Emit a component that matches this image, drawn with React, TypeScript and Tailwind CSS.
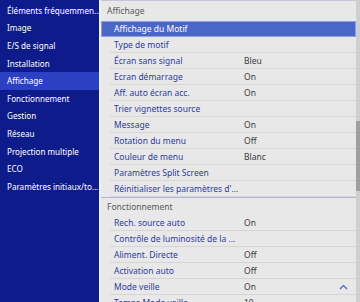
import React from 'react';

type Row = { label: string; value?: string };

const leftItems = [
  'Éléments fréquemmen...',
  'Image',
  'E/S de signal',
  'Installation',
  'Affichage',
  'Fonctionnement',
  'Gestion',
  'Réseau',
  'Projection multiple',
  'ECO',
  'Paramètres initiaux/to...',
];

const affichage: Row[] = [
  { label: 'Affichage du Motif' },
  { label: 'Type de motif' },
  { label: 'Écran sans signal', value: 'Bleu' },
  { label: 'Ecran démarrage', value: 'On' },
  { label: 'Aff. auto écran acc.', value: 'On' },
  { label: 'Trier vignettes source' },
  { label: 'Message', value: 'On' },
  { label: 'Rotation du menu', value: 'Off' },
  { label: 'Couleur de menu', value: 'Blanc' },
  { label: 'Paramètres Split Screen' },
  { label: "Réinitialiser les paramètres d'..." },
];

const fonctionnement: Row[] = [
  { label: 'Rech. source auto', value: 'On' },
  { label: 'Contrôle de luminosité de la ...' },
  { label: 'Aliment. Directe', value: 'Off' },
  { label: 'Activation auto', value: 'Off' },
  { label: 'Mode veille', value: 'On' },
  { label: 'Temps Mode veille', value: '10' },
];

const MenuRow = ({ row, active, chevron }: { row: Row; active?: boolean; chevron?: boolean }) => (
  <div
    className={
      active
        ? 'h-[16px] shrink-0 flex items-center bg-[#4a66c9] border border-[#8da0e0] text-white'
        : 'h-[16px] shrink-0 ml-[9px] flex items-center border-b border-[#d6d6d6] text-[#2e3b9c]'
    }
  >
    <span className={active ? 'pl-[12px] w-[143px] whitespace-nowrap' : 'pl-[4px] w-[134px] whitespace-nowrap'}>{row.label}</span>
    {row.value && <span className="text-[#3a3a3a]">{row.value}</span>}
    {chevron && (
      <svg className="ml-auto mr-[8px]" width="9" height="6" viewBox="0 0 9 6" fill="none">
        <path d="M1 5 L4.5 1.5 L8 5" stroke="#4d5fc2" strokeWidth="1.2" />
      </svg>
    )}
  </div>
);

export default function App() {
  return (
    <div className="w-[360px] h-[302px] overflow-hidden flex text-[8.5px] leading-[12px]" style={{ fontFamily: '"Noto Sans", "DejaVu Sans", sans-serif' }}>
      {/* menu gauche */}
      <div className="w-[99px] shrink-0 h-full bg-[#0e1c8b] pt-[2px] flex flex-col text-[8.1px]">
        {leftItems.map((item, i) => (
          <div
            key={item}
            className={`h-[17.6px] shrink-0 flex items-center pl-[7px] text-white whitespace-nowrap ${i === 4 ? 'bg-[#2b40c2]' : ''}`}
          >
            {item}
          </div>
        ))}
      </div>

      {/* sous-menu */}
      <div className="flex-1 h-full bg-[#e8e8e8] border-l-2 border-[#f3f3f3] flex">
        <div className="flex-1 border-t border-[#c3c6d6] flex flex-col">
          <div className="h-[20px] shrink-0 flex items-center pl-[6px] text-[#5a5a5a]">Affichage</div>
          {affichage.map((r, i) => (
            <MenuRow key={r.label} row={r} active={i === 0} />
          ))}
          <div className="h-[18px] shrink-0 border-t border-[#b4b8dc] flex items-center pl-[6px] text-[#5a5a5a]">
            Fonctionnement
          </div>
          {fonctionnement.map((r, i) => (
            <MenuRow key={r.label} row={r} chevron={i === 4} />
          ))}
        </div>
        {/* barre de défilement */}
        <div className="w-[4px] shrink-0 h-full bg-[#cfcfcf] flex flex-col">
          <div className="h-[121px] shrink-0" />
          <div className="h-[70px] shrink-0 bg-[#9f9f9f]" />
        </div>
      </div>
    </div>
  );
}
